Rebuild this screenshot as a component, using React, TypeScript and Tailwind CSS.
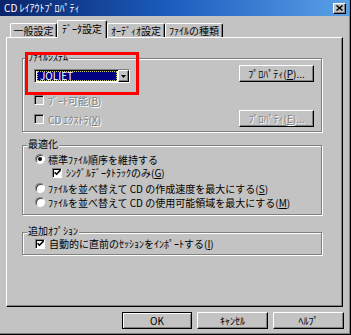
import type { ReactNode } from "react";

const raised =
  "border border-t-white border-l-white border-r-black border-b-black shadow-[inset_-1px_-1px_0_#808080]";
const sunken =
  "border border-t-[#808080] border-l-[#808080] border-r-white border-b-white shadow-[inset_1px_1px_0_#000]";
const dim = "text-[#808080] [text-shadow:1px_1px_0_#fff]";

function Key({ k }: { k: string }) {
  return (
    <>
      (<span className="underline underline-offset-[1px]">{k}</span>)
    </>
  );
}

function CheckBox({ checked, disabled }: { checked?: boolean; disabled?: boolean }) {
  return (
    <span
      className={`w-[10px] h-[10px] shrink-0 flex items-center justify-center ${sunken} ${
        disabled ? "bg-[#c3c3c3]" : "bg-white"
      }`}
    >
      {checked && (
        <svg width="7" height="7" viewBox="0 0 7 7">
          <path d="M0.5 3.2 L2.5 5.2 L6.5 1" stroke="#000" strokeWidth="1.6" fill="none" />
        </svg>
      )}
    </span>
  );
}

function Radio({ on }: { on?: boolean }) {
  return (
    <span className="w-[10px] h-[10px] shrink-0 rounded-full bg-white border border-t-[#808080] border-l-[#808080] border-r-white border-b-white shadow-[inset_1px_1px_0_#404040] flex items-center justify-center">
      {on && <span className="w-[4px] h-[4px] rounded-full bg-black" />}
    </span>
  );
}

function Group({ label, className, children }: { label: string; className: string; children: ReactNode }) {
  return (
    <div
      className={`relative ml-[15px] w-[300px] border border-[#808080] shadow-[inset_1px_1px_0_#fff,1px_1px_0_#fff] ${className}`}
    >
      <span className="absolute -top-[7px] left-[4px] px-[1px] bg-[#c3c3c3] leading-[10px]">{label}</span>
      {children}
    </div>
  );
}

function Btn({ children, w, disabled, def }: { children: ReactNode; w: string; disabled?: boolean; def?: boolean }) {
  return (
    <div
      className={`${w} h-[17px] flex items-center justify-center leading-none ${
        def
          ? "border border-black shadow-[inset_1px_1px_0_#fff,inset_-1px_-1px_0_#808080]"
          : raised
      } ${disabled ? dim : ""}`}
    >
      {children}
    </div>
  );
}

export default function App() {
  const tabs = ["一般設定", "ﾃﾞｰﾀ設定", "ｵｰﾃﾞｨｵ設定", "ﾌｧｲﾙの種類"];
  const widths = ["w-[47px]", "w-[50px]", "w-[58px]", "w-[58px]"];

  return (
    <div className="w-[351px] h-[335px] bg-[#c3c3c3] flex flex-col border-r border-b border-black shadow-[inset_-1px_-1px_0_#808080] font-['Noto_Sans_CJK_JP','Noto_Sans',sans-serif] text-[10px] text-black overflow-hidden">
      {/* title bar */}
      <div className="h-[16px] shrink-0 flex items-center bg-gradient-to-r from-[#0a246a] via-[#1c5fc0] to-[#5aa0e6] mr-[1px]">
        <span className="pl-[4px] text-white leading-none">CD ﾚｲｱｳﾄﾌﾟﾛﾊﾟﾃｨ</span>
        <div className={`ml-auto mr-[3px] w-[13px] h-[11px] bg-[#c3c3c3] flex items-center justify-center ${raised}`}>
          <svg width="7" height="6" viewBox="0 0 7 6">
            <path d="M0.5 0.5 L6.5 5.5 M6.5 0.5 L0.5 5.5" stroke="#000" strokeWidth="1.5" />
          </svg>
        </div>
      </div>

      {/* tabs */}
      <div className="h-[21px] shrink-0 flex items-end pl-[10px]">
        {tabs.map((t, i) => (
          <div
            key={t}
            className={`${widths[i]} flex items-center justify-center leading-none rounded-t-[2px] border-t border-l border-r border-t-white border-l-white border-r-black shadow-[inset_-1px_0_0_#808080] ${
              i === 1 ? "h-[18px] -mb-px relative z-10 bg-[#c3c3c3] pb-[2px]" : "h-[14px]"
            }`}
          >
            {t}
          </div>
        ))}
      </div>

      {/* panel */}
      <div className="ml-[6px] w-[337px] h-[270px] shrink-0 border border-t-white border-l-white border-r-black border-b-black shadow-[inset_-1px_-1px_0_#808080] flex flex-col">
        <Group label="ﾌｧｲﾙｼｽﾃﾑ" className="mt-[20px] h-[74px] flex justify-between">
          <div className="pl-[11px] pt-[10px] flex flex-col">
            <div className={`w-[96px] h-[14px] bg-white flex ${sunken}`}>
              <div className="flex-1 p-[1px] pl-[2px]">
                <div className="h-full bg-[#000080] outline outline-1 outline-dotted outline-[#c8c860] -outline-offset-1 text-white leading-[10px] pl-[3px]">
                  JOLIET
                </div>
              </div>
              <div className={`w-[11px] h-full bg-[#c3c3c3] flex items-center justify-center ${raised}`}>
                <svg width="5" height="3" viewBox="0 0 5 3">
                  <path d="M0 0 H5 L2.5 3 Z" fill="#000" />
                </svg>
              </div>
            </div>
            <div className="mt-[10px] h-[14px] flex items-center gap-[4px]">
              <CheckBox disabled />
              <span className={dim}>
                ﾌﾞｰﾄ可能<Key k="B" />
              </span>
            </div>
            <div className="mt-[5px] h-[14px] flex items-center gap-[4px]">
              <CheckBox disabled />
              <span className={dim}>
                CD ｴｸｽﾄﾗ<Key k="X" />
              </span>
            </div>
          </div>
          <div className="pr-[7px] pt-[6px] flex flex-col gap-[28px]">
            <Btn w="w-[75px]">
              ﾌﾟﾛﾊﾟﾃｨ<Key k="P" />...
            </Btn>
            <Btn w="w-[75px]" disabled>
              ﾌﾟﾛﾊﾟﾃｨ<Key k="E" />...
            </Btn>
          </div>
          <div className="absolute left-[2px] -top-[7px] w-[114px] h-[43px] border-[3px] border-[#ff0000]" />
        </Group>

        <Group label="最適化" className="mt-[13px] h-[70px] pt-[6px] pl-[12px] flex flex-col">
          <div className="h-[14px] flex items-center gap-[3px]">
            <Radio on />
            <span>標準ﾌｧｲﾙ順序を維持する</span>
          </div>
          <div className="h-[13px] pl-[17px] flex items-center gap-[4px]">
            <CheckBox checked />
            <span>
              ｼﾝｸﾞﾙﾃﾞｰﾀﾄﾗｯｸのみ<Key k="G" />
            </span>
          </div>
          <div className="mt-[2px] h-[14px] flex items-center gap-[3px]">
            <Radio />
            <span>
              ﾌｧｲﾙを並べ替えて CD の作成速度を最大にする<Key k="S" />
            </span>
          </div>
          <div className="h-[14px] flex items-center gap-[3px]">
            <Radio />
            <span>
              ﾌｧｲﾙを並べ替えて CD の使用可能領域を最大にする<Key k="M" />
            </span>
          </div>
        </Group>

        <Group label="追加ｵﾌﾟｼｮﾝ" className="mt-[17px] h-[23px] pt-[4px] pl-[12px] flex flex-col">
          <div className="h-[13px] flex items-center gap-[4px]">
            <CheckBox checked />
            <span className="leading-[11px]">
              自動的に直前のｾｯｼｮﾝをｲﾝﾎﾟｰﾄする<Key k="I" />
            </span>
          </div>
        </Group>
      </div>

      {/* buttons */}
      <div className="mt-[5px] flex justify-end gap-[5px] pr-[6px]">
        <Btn w="w-[70px]" def>
          OK
        </Btn>
        <Btn w="w-[71px]">ｷｬﾝｾﾙ</Btn>
        <Btn w="w-[71px]">ﾍﾙﾌﾟ</Btn>
      </div>
    </div>
  );
}
